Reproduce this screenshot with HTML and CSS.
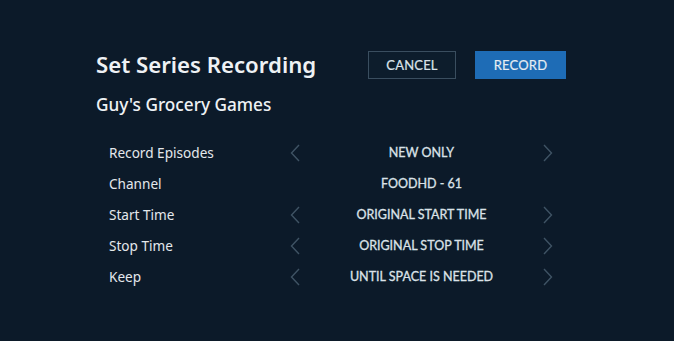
FILE: index.html
```html
<!DOCTYPE html>
<html>
<head>
<meta charset="utf-8">
<link rel="stylesheet" href="styles.css">
</head>
<body>
<div class="screen">
  <div class="header">
    <h1 class="title">Set Series Recording</h1>
    <div class="actions">
      <button class="btn btn-cancel">CANCEL</button>
      <button class="btn btn-record">RECORD</button>
    </div>
  </div>
  <h2 class="subtitle">Guy's Grocery Games</h2>
  <div class="rows">
    <div class="row">
      <span class="label">Record Episodes</span>
      <span class="chev"><svg width="10" height="18" viewBox="0 0 10 18"><path d="M9 1 L1.5 9 L9 17" fill="none" stroke="#3f5364" stroke-width="1.4"/></svg></span>
      <span class="value">NEW ONLY</span>
      <span class="chev"><svg width="10" height="18" viewBox="0 0 10 18"><path d="M1 1 L8.5 9 L1 17" fill="none" stroke="#3f5364" stroke-width="1.4"/></svg></span>
    </div>
    <div class="row">
      <span class="label">Channel</span>
      <span class="chev"></span>
      <span class="value">FOODHD - 61</span>
      <span class="chev"></span>
    </div>
    <div class="row">
      <span class="label">Start Time</span>
      <span class="chev"><svg width="10" height="18" viewBox="0 0 10 18"><path d="M9 1 L1.5 9 L9 17" fill="none" stroke="#3f5364" stroke-width="1.4"/></svg></span>
      <span class="value">ORIGINAL START TIME</span>
      <span class="chev"><svg width="10" height="18" viewBox="0 0 10 18"><path d="M1 1 L8.5 9 L1 17" fill="none" stroke="#3f5364" stroke-width="1.4"/></svg></span>
    </div>
    <div class="row">
      <span class="label">Stop Time</span>
      <span class="chev"><svg width="10" height="18" viewBox="0 0 10 18"><path d="M9 1 L1.5 9 L9 17" fill="none" stroke="#3f5364" stroke-width="1.4"/></svg></span>
      <span class="value">ORIGINAL STOP TIME</span>
      <span class="chev"><svg width="10" height="18" viewBox="0 0 10 18"><path d="M1 1 L8.5 9 L1 17" fill="none" stroke="#3f5364" stroke-width="1.4"/></svg></span>
    </div>
    <div class="row">
      <span class="label">Keep</span>
      <span class="chev"><svg width="10" height="18" viewBox="0 0 10 18"><path d="M9 1 L1.5 9 L9 17" fill="none" stroke="#3f5364" stroke-width="1.4"/></svg></span>
      <span class="value">UNTIL SPACE IS NEEDED</span>
      <span class="chev"><svg width="10" height="18" viewBox="0 0 10 18"><path d="M1 1 L8.5 9 L1 17" fill="none" stroke="#3f5364" stroke-width="1.4"/></svg></span>
    </div>
  </div>
</div>
</body>
</html>
```

FILE: styles.css
```css
html, body {
  margin: 0;
  padding: 0;
  background: #0c1a29;
}
.screen {
  width: 674px;
  height: 341px;
  box-sizing: border-box;
  padding: 51px 0 0 96px;
  font-family: "Noto Sans", sans-serif;
  color: #eef1f4;
}
.header {
  display: flex;
  align-items: center;
  width: 470px;
  justify-content: space-between;
  height: 28px;
}
.title {
  margin: 0;
  font-size: 22.2px;
  font-weight: 600;
  line-height: 28px;
}
.actions {
  display: flex;
  gap: 19px;
}
.btn {
  font-family: "Lato", sans-serif;
  font-size: 13px;
  font-weight: 400;
  height: 28px;
  padding: 0;
  color: #dbe3ea;
  letter-spacing: 0.2px;
  -webkit-text-stroke: 0.2px #dbe3ea;
}
.btn-cancel {
  width: 88px;
  background: #0d1d2c;
  border: 1px solid #3a4e5f;
}
.btn-record {
  width: 91px;
  background: #1e6cb6;
  border: 1px solid #1e6cb6;
  color: #e8eef5;
}
.subtitle {
  margin: 14px 0 0 0;
  font-size: 17.2px;
  font-weight: 500;
  line-height: 24px;
}
.rows {
  margin-top: 20px;
  padding-left: 13px;
}
.row {
  display: flex;
  align-items: center;
  height: 31px;
}
.label {
  width: 181px;
  font-size: 13.6px;
  font-weight: 400;
  color: #e4e8ec;
}
.chev {
  width: 10px;
  height: 18px;
  display: flex;
}
.value {
  width: 243px;
  text-align: center;
  font-family: "Lato", sans-serif;
  font-weight: 400;
  font-size: 12.5px;
  color: #dbe2e8;
  -webkit-text-stroke: 0.3px #dbe2e8;
}
```
